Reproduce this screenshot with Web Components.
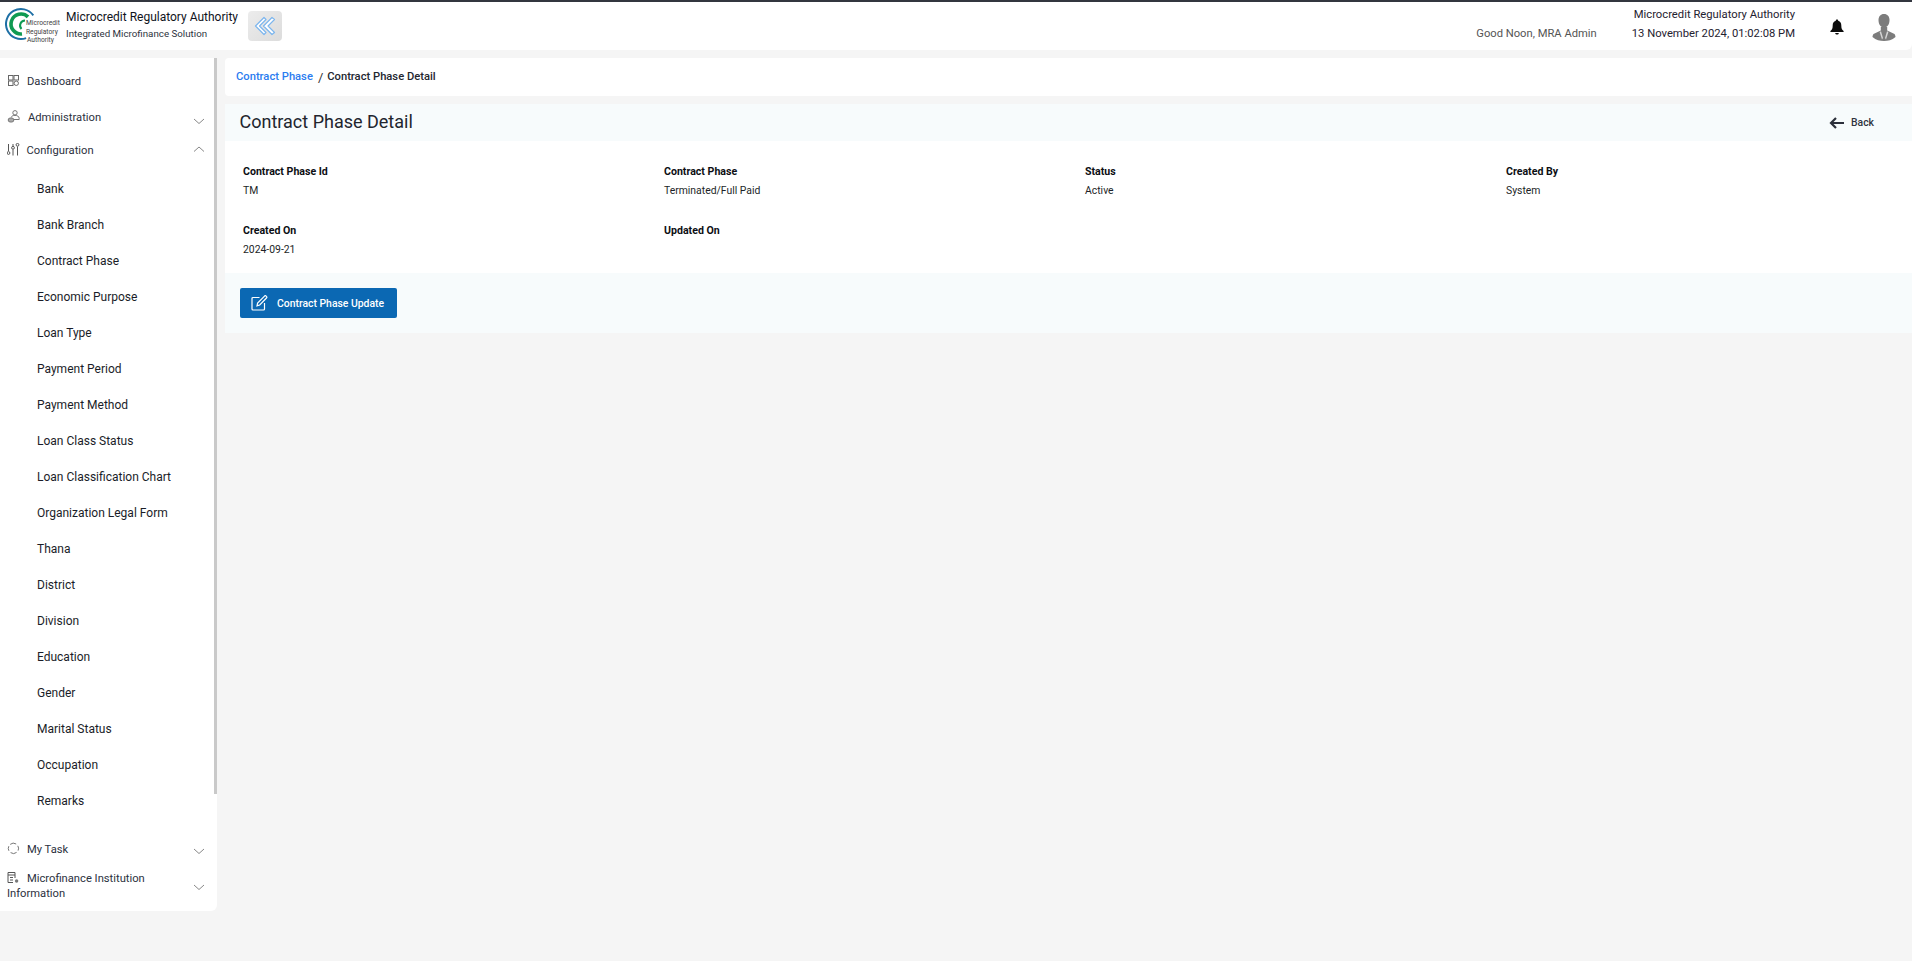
<!DOCTYPE html>
<html>
<head>
<meta charset="utf-8">
<title>Contract Phase Detail</title>
<style>
    html, body { margin: 0; padding: 0; height: 100%; }
    body {
        background: #f5f5f5;
        font-family: Roboto, "Liberation Sans", sans-serif;
        overflow: hidden;
    }
</style>
</head>
<body>
<app-shell>
    <app-header slot="header"></app-header>
    <side-nav slot="nav">
        <nav-item label="Dashboard" icon="grid" class="dash"></nav-item>
        <nav-item label="Administration" icon="admin" caret="down" class="admin"></nav-item>
        <nav-item label="Configuration" icon="sliders" caret="up" class="config"></nav-item>
        <nav-sub>Bank</nav-sub>
        <nav-sub>Bank Branch</nav-sub>
        <nav-sub>Contract Phase</nav-sub>
        <nav-sub>Economic Purpose</nav-sub>
        <nav-sub>Loan Type</nav-sub>
        <nav-sub>Payment Period</nav-sub>
        <nav-sub>Payment Method</nav-sub>
        <nav-sub>Loan Class Status</nav-sub>
        <nav-sub>Loan Classification Chart</nav-sub>
        <nav-sub>Organization Legal Form</nav-sub>
        <nav-sub>Thana</nav-sub>
        <nav-sub>District</nav-sub>
        <nav-sub>Division</nav-sub>
        <nav-sub>Education</nav-sub>
        <nav-sub>Gender</nav-sub>
        <nav-sub>Marital Status</nav-sub>
        <nav-sub>Occupation</nav-sub>
        <nav-sub>Remarks</nav-sub>
        <nav-item label="My Task" icon="spinner" caret="down" class="task"></nav-item>
        <nav-item label="Microfinance Institution Information" icon="building" caret="down" class="mfi"></nav-item>
    </side-nav>
    <bread-crumb slot="main" parent="Contract Phase" current="Contract Phase Detail"></bread-crumb>
    <detail-panel slot="main" title="Contract Phase Detail" action="Contract Phase Update">
        <detail-field label="Contract Phase Id">TM</detail-field>
        <detail-field label="Contract Phase">Terminated/Full Paid</detail-field>
        <detail-field label="Status">Active</detail-field>
        <detail-field label="Created By">System</detail-field>
        <detail-field label="Created On">2024-09-21</detail-field>
        <detail-field label="Updated On"></detail-field>
    </detail-panel>
</app-shell>

<script>
const ICONS = {
    grid: `<svg width="13" height="13" viewBox="0 0 13 13" fill="none" stroke="#666" stroke-width="1">
        <rect x="1.5" y="1.5" width="4.5" height="4.5"/><rect x="7" y="1.5" width="4.5" height="4.5"/>
        <rect x="1.5" y="7" width="4.5" height="4.5"/><circle cx="9.25" cy="9.25" r="2.2"/></svg>`,
    admin: `<svg width="13" height="13" viewBox="0 0 13 13" fill="none" stroke="#777" stroke-width="1">
        <circle cx="8" cy="2.8" r="2.2"/><path d="M4.3 7.4 C4.6 5.8 6.2 5.4 8 5.4 C10.2 5.4 12 6.2 12.2 8.4 L12.2 9.5 H7"/>
        <rect x="1.2" y="8" width="5.6" height="4" rx="2" fill="#aaa"/></svg>`,
    sliders: `<svg width="13" height="13" viewBox="0 0 13 13" fill="none" stroke="#555" stroke-width="1">
        <path d="M1.5 1 V8 M6 1 V3 M6 6.5 V12.5 M10.5 3.5 V12.5"/>
        <circle cx="1.5" cy="10" r="1.4"/><circle cx="6" cy="4.8" r="1.4"/><circle cx="10.5" cy="1.8" r="1.4"/></svg>`,
    spinner: `<svg width="13" height="13" viewBox="0 0 13 13" fill="none" stroke="#777" stroke-width="1">
        <path d="M3.2 2.4 A5 5 0 0 1 9.2 2 M10.8 3.8 A5 5 0 0 1 11.1 8.6 M9.6 10.4 A5 5 0 0 1 3.6 10.6 M1.9 8.8 A5 5 0 0 1 1.8 4.2"/></svg>`,
    building: `<svg width="13" height="13" viewBox="0 0 13 13" fill="none" stroke="#555" stroke-width="1">
        <path d="M8 7 V1.5 H1 V11.5 H6"/><path d="M1 4 H8 M3 6.5 H6 M3 9 H6"/>
        <circle cx="9.6" cy="10" r="1.7" fill="#777" stroke="none"/></svg>`
};

class AppShell extends HTMLElement {
    constructor() {
        super();
        this.attachShadow({ mode: "open" });
        this.shadowRoot.innerHTML = `
            <style>
                :host { display: flex; flex-direction: column; }
                .top { height: 2px; background: #33363f; }
                .body { display: flex; gap: 8px; padding-top: 8px; align-items: flex-start; }
                .main { flex: 1; min-width: 0; display: flex; flex-direction: column; gap: 8px; }
            </style>
            <div class="top"></div>
            <slot name="header"></slot>
            <div class="body">
                <slot name="nav"></slot>
                <div class="main"><slot name="main"></slot></div>
            </div>
        `;
    }
}

class AppHeader extends HTMLElement {
    constructor() {
        super();
        this.attachShadow({ mode: "open" });
        this.shadowRoot.innerHTML = `
            <style>
                :host {
                    display: flex; align-items: stretch; height: 48px; background: #fff;
                    border-radius: 0 0 6px 0; color: #1f2230;
                }
                .logo { position: relative; width: 61px; margin-left: 5px; flex: none; }
                .logo svg { position: absolute; left: 0; top: 4px; }
                .logo span {
                    position: absolute; color: #444; font-size: 6.7px; line-height: 8px;
                    font-weight: 400; white-space: nowrap;
                }
                .brand { display: flex; flex-direction: column; width: 182px; flex: none; }
                .brand b { font-weight: 400; font-size: 12px; line-height: 16px; margin-top: 7px; color: #10131c; white-space: nowrap; }
                .brand small { font-size: 9.75px; line-height: 14px; margin-top: 2px; color: #2d3340; white-space: nowrap; }
                .collapse {
                    width: 34px; height: 30px; margin-top: 9px; border-radius: 4px; flex: none;
                    background: linear-gradient(135deg, #ececec, #dcdcdc);
                    display: flex; align-items: center; justify-content: center;
                }
                .spacer { flex: 1; }
                .greet { font-size: 11.2px; color: #555; margin-top: 25px; line-height: 14px; white-space: nowrap; }
                .when {
                    margin-left: 35px; display: flex; flex-direction: column; align-items: flex-end;
                    font-size: 11.25px; line-height: 14px; color: #1f2230; padding-top: 6px; gap: 5px; white-space: nowrap;
                }
                .bell { margin-left: 35px; margin-top: 17px; flex: none; }
                .avatar { margin-left: 28px; margin-right: 16px; margin-top: 12px; flex: none; }
            </style>
            <div class="logo">
                <svg width="38" height="36" viewBox="0 0 38 36" fill="none">
                    <path d="M28.3 9.4 A15 15 0 1 0 21.1 32.1" stroke="#1d6fa5" stroke-width="2"/>
                    <path d="M23 10.9 A10 10 0 1 0 17 28" stroke="#0f9a52" stroke-width="3.6"/>
                    <path d="M20 14.5 A5 5 0 0 0 16.5 23" stroke="#0f9a52" stroke-width="2"/>
                </svg>
                <span style="top:17px;left:21px">Microcredit</span>
                <span style="top:26px;left:21px">Regulatory</span>
                <span style="top:34px;left:22px">Authority</span>
            </div>
            <div class="brand">
                <b>Microcredit Regulatory Authority</b>
                <small>Integrated Microfinance Solution</small>
            </div>
            <div class="collapse">
                <svg width="22" height="20" viewBox="0 0 22 20" fill="#fff" stroke="#7db6ee" stroke-width="1.2" stroke-linejoin="round">
                    <path d="M10 1.5 L1.5 10 L10 18.5 L12 16.5 L5.5 10 L12 3.5 Z"/>
                    <path d="M18 1.5 L9.5 10 L18 18.5 L20.5 16.5 L14 10 L20.5 3.5 Z"/>
                </svg>
            </div>
            <div class="spacer"></div>
            <div class="greet">Good Noon, MRA Admin</div>
            <div class="when">
                <span>Microcredit Regulatory Authority</span>
                <span>13 November 2024, 01:02:08 PM</span>
            </div>
            <svg class="bell" width="14" height="16" viewBox="0 0 14 16" fill="#0c0c0c">
                <path d="M7 0.5 C7.8 0.5 8.2 1 8.2 1.8 C10.4 2.4 11.3 4.2 11.3 6.5 C11.3 9.5 12 10.7 13.6 12 V13 H0.4 V12 C2 10.7 2.7 9.5 2.7 6.5 C2.7 4.2 3.6 2.4 5.8 1.8 C5.8 1 6.2 0.5 7 0.5 Z"/>
                <path d="M5.2 14 H8.8 C8.7 15 8 15.6 7 15.6 C6 15.6 5.3 15 5.2 14 Z"/>
            </svg>
            <svg class="avatar" width="24" height="27" viewBox="0 0 24 27" fill="#7c7c7c">
                <path d="M12 0 C15.5 0 17.5 2.6 17.5 6 C17.5 9.5 16 13.5 12 13.5 C8 13.5 6.5 9.5 6.5 6 C6.5 2.6 8.5 0 12 0 Z"/>
                <path d="M8.8 13 L8.8 16.5 L1.5 20 C0.8 21 0.4 22.5 0.5 23 C4 26 8 27 12 27 C16 27 20 26 23.5 23 C23.6 22.5 23.2 21 22.5 20 L15.2 16.5 L15.2 13 Z"/>
                <path d="M9 17.2 L11 24 L10 25.5 L7.6 18 Z M15 17.2 L13 24 L14 25.5 L16.4 18 Z" fill="#d5d5d5"/>
            </svg>
        `;
    }
}

class SideNav extends HTMLElement {
    constructor() {
        super();
        this.attachShadow({ mode: "open" });
        this.shadowRoot.innerHTML = `
            <style>
                :host {
                    display: flex; flex-direction: column; position: relative; flex: none;
                    width: 217px; height: 853px; background: #fff; border-radius: 0 0 6px 0;
                }
                .thumb { position: absolute; right: 0; top: 0; width: 3px; height: 736px; background: #c9c9c9; }
                ::slotted(nav-item.dash) { height: 46px; }
                ::slotted(nav-item.admin) { height: 26px; }
                ::slotted(nav-item.config) { height: 40px; margin-bottom: 1px; }
                ::slotted(nav-item.task) { height: 34px; margin-top: 13px; }
                ::slotted(nav-item.mfi) { height: 40px; }
            </style>
            <slot></slot>
            <div class="thumb"></div>
        `;
    }
}

class NavItem extends HTMLElement {
    constructor() {
        super();
        this.attachShadow({ mode: "open" });
    }

    connectedCallback() {
        const caret = this.getAttribute("caret");
        const chev = caret === "up" ? "M1 6.5 L6 2 L11 6.5" : "M1 2 L6 6.5 L11 2";
        this.shadowRoot.innerHTML = `
            <style>
                :host { display: flex; align-items: center; position: relative; padding-left: 7px; padding-right: 40px; }
                .txt { font-size: 11.2px; line-height: 15px; color: #2c3140; }
                .ico { display: inline-block; width: 20px; vertical-align: -2px; }
                :host(.admin) .ico { width: 21px; }
                :host(.config) .ico { width: 19.5px; }
                .ico svg { display: block; }
                .caret { position: absolute; right: 12px; top: 50%; margin-top: -2px; }
                :host(.admin) .caret { margin-top: 0; }
                :host(.config) .caret { margin-top: -5px; }
                :host(.mfi) .caret { margin-top: -3px; }
            </style>
            <div class="txt"><span class="ico">${ICONS[this.getAttribute("icon")]}</span>${this.getAttribute("label")}</div>
            ${caret ? `<svg class="caret" width="12" height="8" viewBox="0 0 12 8" fill="none" stroke="#888" stroke-width="1"><path d="${chev}"/></svg>` : ""}
        `;
    }
}

class NavSub extends HTMLElement {
    constructor() {
        super();
        this.attachShadow({ mode: "open" });
        this.shadowRoot.innerHTML = `
            <style>
                :host {
                    display: flex; align-items: center; height: 36px; padding-left: 37px;
                    font-size: 12px; color: #1a1d28;
                }
            </style>
            <slot></slot>
        `;
    }
}

class BreadCrumb extends HTMLElement {
    constructor() {
        super();
        this.attachShadow({ mode: "open" });
    }

    connectedCallback() {
        this.shadowRoot.innerHTML = `
            <style>
                :host {
                    display: flex; align-items: center; height: 38px; padding-left: 11px;
                    background: #fff; border-radius: 4px 0 0 4px; font-size: 11.2px; font-weight: 500;
                }
                a { color: #2b7cf0; text-decoration: none; margin-top: -1px; }
                i { font-style: normal; font-weight: 400; color: #333; margin: 0 4px 0 5px; font-size: 13px; }
                span { color: #23262f; margin-top: -2px; }
            </style>
            <a href="#">${this.getAttribute("parent")}</a><i>/</i><span>${this.getAttribute("current")}</span>
        `;
    }
}

class DetailPanel extends HTMLElement {
    constructor() {
        super();
        this.attachShadow({ mode: "open" });
    }

    connectedCallback() {
        this.shadowRoot.innerHTML = `
            <style>
                :host { display: block; }
                .head {
                    display: flex; align-items: center; justify-content: space-between;
                    height: 37px; padding: 0 38px 0 14.5px; background: #f7fbfc;
                }
                h1 { margin: -2px 0 0; font-size: 18px; font-weight: 400; color: #22252e; }
                .back { display: flex; align-items: center; gap: 7px; font-size: 10.4px; font-weight: 500; color: #30343f; }
                .grid {
                    display: grid; grid-template-columns: repeat(4, 421px); grid-auto-rows: 58.5px;
                    padding: 24px 0 0 18px; height: 108px; background: #fff;
                }
                .foot { display: flex; align-items: center; height: 60px; padding-left: 15px; background: #f7fbfc; }
                button {
                    display: flex; align-items: center; gap: 9px; height: 30px; padding: 0 13px 0 11px;
                    background: #0b68b3; color: #fff; border: 0; border-radius: 2px;
                    font: 500 10.4px Roboto, "Liberation Sans", sans-serif;
                }
                button svg { display: block; }
            </style>
            <div class="head">
                <h1>${this.getAttribute("title")}</h1>
                <div class="back">
                    <svg width="15" height="12" viewBox="0 0 15 12" fill="none" stroke="#2b2f3a" stroke-width="2.2"><path d="M15 6 H2 M7 1 L2 6 L7 11"/></svg>
                    <span>Back</span>
                </div>
            </div>
            <div class="grid"><slot></slot></div>
            <div class="foot">
                <button>
                    <svg width="17" height="16" viewBox="0 0 17 16" fill="none" stroke="#fff" stroke-width="1.2">
                        <path d="M8.5 2.5 H2 A1 1 0 0 0 1 3.5 V14 A1 1 0 0 0 2 15 H12.5 A1 1 0 0 0 13.5 14 V8"/>
                        <path d="M6 10.8 L6.6 8 L13.5 1.2 A1 1 0 0 1 15.2 1.1 L15.6 1.6 A1 1 0 0 1 15.5 3 L8.7 10 Z"/>
                    </svg>
                    <span>${this.getAttribute("action")}</span>
                </button>
            </div>
        `;
    }
}

class DetailField extends HTMLElement {
    constructor() {
        super();
        this.attachShadow({ mode: "open" });
    }

    connectedCallback() {
        this.shadowRoot.innerHTML = `
            <style>
                :host { display: block; font-size: 10.4px; line-height: 14px; color: #1c1f27; }
                b { display: block; font-weight: 700; font-size: 10.6px; color: #0c0e13; margin-bottom: 5px; }
            </style>
            <b>${this.getAttribute("label")}</b>
            <slot></slot>
        `;
    }
}

customElements.define("app-shell", AppShell);
customElements.define("app-header", AppHeader);
customElements.define("side-nav", SideNav);
customElements.define("nav-item", NavItem);
customElements.define("nav-sub", NavSub);
customElements.define("bread-crumb", BreadCrumb);
customElements.define("detail-panel", DetailPanel);
customElements.define("detail-field", DetailField);
</script>
</body>
</html>
